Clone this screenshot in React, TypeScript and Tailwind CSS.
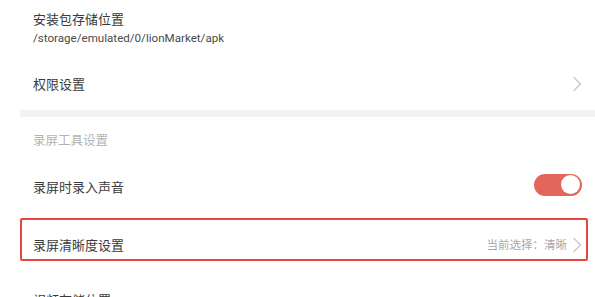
import React from 'react';

const cjk = { fontFamily: '"Noto Sans CJK SC", "Noto Sans", sans-serif' };

function Chevron() {
    return (
        <svg width="10" height="16" viewBox="0 0 10 16" fill="none">
            <path d="M2 1.5L8.5 8L2 14.5" stroke="#c4c4c4" strokeWidth="1.2" strokeLinecap="round" strokeLinejoin="round" />
        </svg>
    );
}

function Toggle() {
    return (
        <div className="w-[48px] h-[22px] rounded-full bg-[#e2665a] flex items-center justify-end pr-[2px] -mt-[5px]">
            <div className="w-[19px] h-[19px] rounded-full bg-white" />
        </div>
    );
}

export default function App() {
    return (
        <div className="w-[595px] h-[297px] overflow-hidden bg-white pl-5" style={cjk}>
            {/* Install package location */}
            <div className="h-[58px] pl-[13px] pt-[11px]">
                <p className="text-[13px] leading-[15px] text-[#3a3a3a]">安装包存储位置</p>
                <p className="text-[11.6px] leading-[13px] mt-[6px] text-[#4a4a4a]" style={{ fontFamily: 'Roboto, "Noto Sans", sans-serif' }}>
                    /storage/emulated/0/lionMarket/apk
                </p>
            </div>

            {/* Permission settings */}
            <div className="h-[52px] pl-[13px] pr-[13px] flex items-center justify-between">
                <span className="text-[13px] text-[#3a3a3a]">权限设置</span>
                <Chevron />
            </div>

            <div className="h-[7px] bg-[#f2f2f2]" />

            {/* Section header */}
            <div className="h-[46px] pl-[13px] flex items-center">
                <span className="text-[12.5px] text-[#b3b3b3]">录屏工具设置</span>
            </div>

            {/* Record sound */}
            <div className="h-[48px] pl-[13px] pr-[13px] flex items-center justify-between">
                <span className="text-[13px] text-[#3a3a3a]">录屏时录入声音</span>
                <Toggle />
            </div>

            {/* Resolution setting (highlighted) */}
            <div className="mt-[7px] mr-[7px] h-[43px] border-[2.5px] border-[#e5473b] rounded-[2px] pl-[11px] pr-[4px] pt-[10px] flex items-center justify-between">
                <span className="text-[13px] text-[#3a3a3a]">录屏清晰度设置</span>
                <div className="flex items-center gap-[5px]">
                    <span className="text-[11.5px] text-[#a8a8a8]">当前选择：清晰</span>
                    <Chevron />
                </div>
            </div>

            {/* Video location */}
            <div className="pl-[13px] pt-[25px]">
                <span className="text-[13px] leading-[15px] text-[#3a3a3a]">视频存储位置</span>
            </div>
        </div>
    );
}
